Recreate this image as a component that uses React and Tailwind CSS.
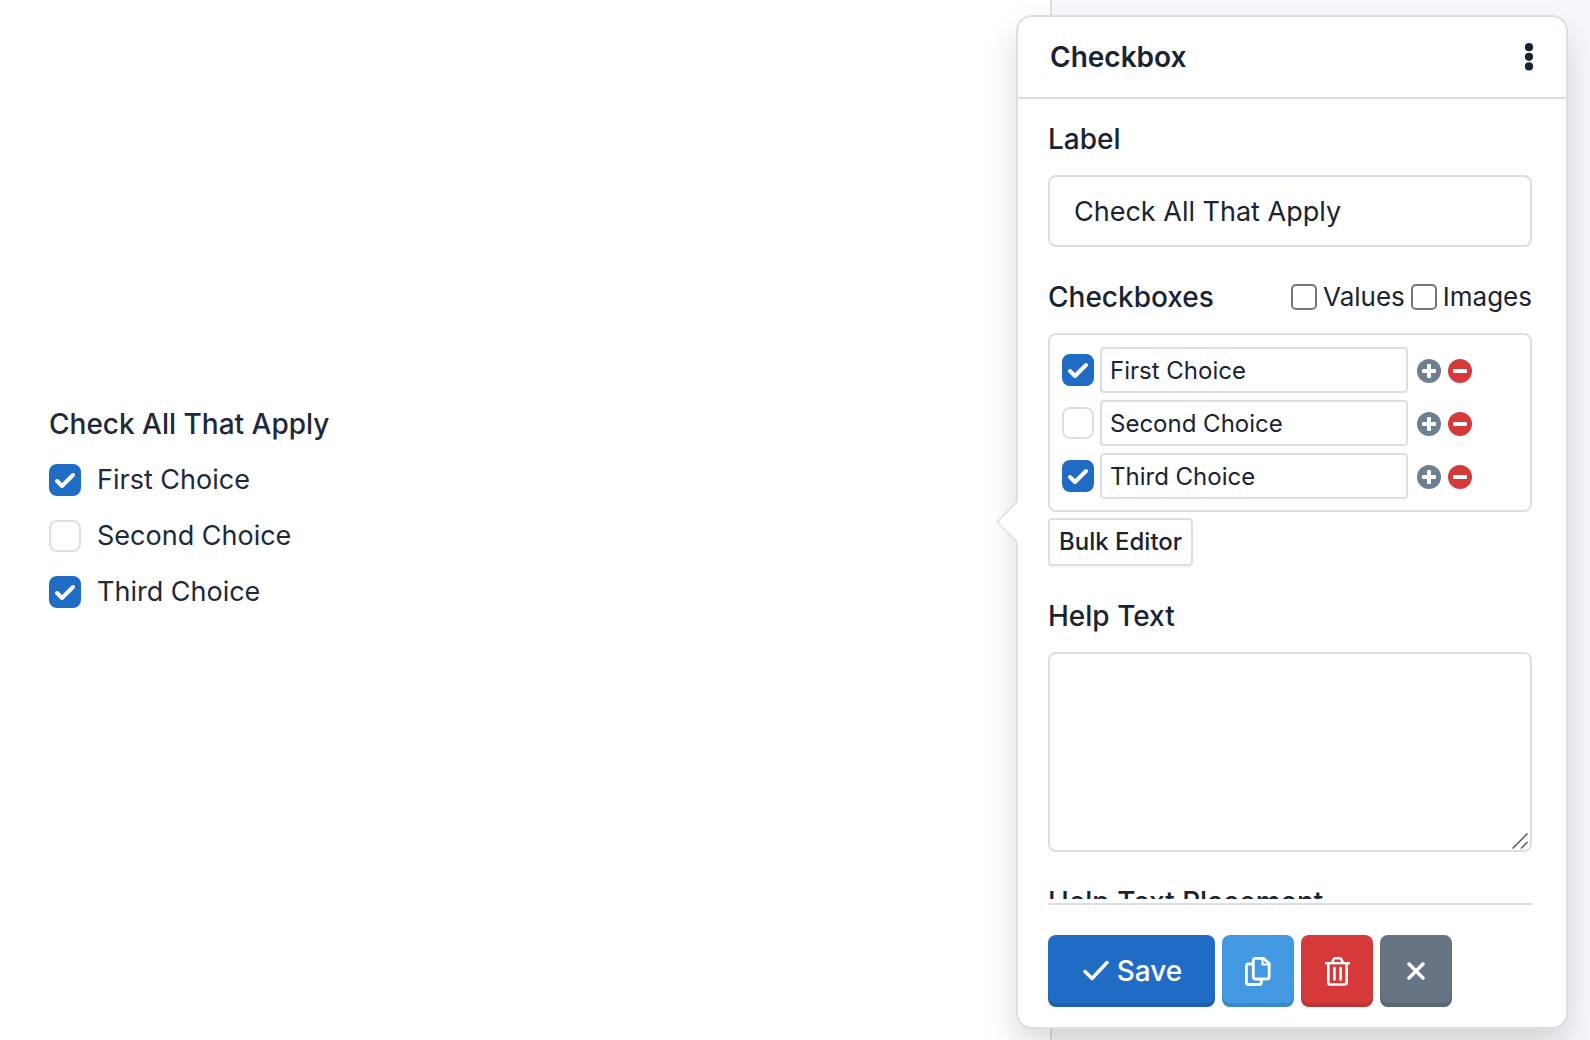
import { useState } from "react";

const INITIAL_CHOICES = [
  { id: "first", text: "First Choice", checked: true },
  { id: "second", text: "Second Choice", checked: false },
  { id: "third", text: "Third Choice", checked: true },
];

function Checkbox({ id, checked, onChange, label }) {
  return (
    <span className="grid size-8 shrink-0">
      <input
        id={id}
        type="checkbox"
        aria-label={label}
        checked={checked}
        onChange={onChange}
        className="peer col-start-1 row-start-1 size-8 appearance-none rounded-lg border-2 border-[#dcdfe6] bg-white checked:border-[#206bc4] checked:bg-[#206bc4]"
      />
      <svg
        viewBox="0 0 16 16"
        className="pointer-events-none invisible col-start-1 row-start-1 size-8 peer-checked:visible"
        fill="none"
        stroke="#fff"
        strokeWidth="2"
        strokeLinecap="round"
        strokeLinejoin="round"
      >
        <path d="M4 8.5l2.5 2.5l5.5-5.5" />
      </svg>
    </span>
  );
}

function PlainCheckbox({ id, label }) {
  return (
    <span className="flex items-center gap-[6px]">
      <input
        id={id}
        type="checkbox"
        className="size-[26px] appearance-none rounded-[5px] border-2 border-[#767676] bg-white checked:bg-[#206bc4]"
      />
      <label htmlFor={id}>{label}</label>
    </span>
  );
}

function PlusIcon() {
  return (
    <svg viewBox="0 0 24 24" className="size-6">
      <circle cx="12" cy="12" r="12" fill="#6c8092" />
      <rect x="5" y="10" width="14" height="4" rx="1" fill="#fff" />
      <rect x="10" y="5" width="4" height="14" rx="1" fill="#fff" />
    </svg>
  );
}

function MinusIcon() {
  return (
    <svg viewBox="0 0 24 24" className="size-6">
      <circle cx="12" cy="12" r="12" fill="#d63939" />
      <rect x="5" y="10" width="14" height="4" rx="1" fill="#fff" />
    </svg>
  );
}

function Preview({ choices, onToggle }) {
  return (
    <main className="flex min-w-0 flex-1 flex-col justify-center border-r-2 border-[#dadfe5] bg-white pb-6 pl-[49px] text-[#1e293b]">
      <fieldset>
        <legend className="mb-4 font-medium leading-10">Check All That Apply</legend>
        <div className="flex flex-col gap-4 text-[27px]">
          {choices.map((choice) => (
            <div key={choice.id} className="flex items-center gap-4">
              <Checkbox
                id={`preview-${choice.id}`}
                checked={choice.checked}
                onChange={() => onToggle(choice.id)}
              />
              <label htmlFor={`preview-${choice.id}`} className="leading-10">
                {choice.text}
              </label>
            </div>
          ))}
        </div>
      </fieldset>
    </main>
  );
}

const actionButton =
  "flex h-18 items-center justify-center rounded-lg text-white shadow-[inset_0_-4px_0_rgba(24,36,51,0.15)]";

export default function App() {
  const [choices, setChoices] = useState(INITIAL_CHOICES);

  const toggle = (id) =>
    setChoices(choices.map((c) => (c.id === id ? { ...c, checked: !c.checked } : c)));

  const rename = (id, text) =>
    setChoices(choices.map((c) => (c.id === id ? { ...c, text } : c)));

  return (
    <div className="relative flex h-screen overflow-hidden bg-[#f6f8fb] font-['Inter',sans-serif] text-[28px] text-[#182433]">
      <Preview choices={choices} onToggle={toggle} />
      <div className="w-[538px] shrink-0" />

      {/* field settings popover, floats over the form and the sidebar */}
      <aside className="absolute top-[15px] right-[22px] bottom-[11px] flex w-[552px] flex-col rounded-2xl border-2 border-[#dadfe5] bg-white shadow-[0_16px_32px_rgba(0,0,0,0.15)]">
        <svg viewBox="0 0 22 42" className="absolute top-1/2 right-full h-[42px] w-[22px] -translate-y-1/2">
          <path d="M22 0 1 21 22 42Z" fill="#fff" />
          <path d="M21 1 1 21 21 41" fill="none" stroke="#dadfe5" strokeWidth="1.5" />
        </svg>

        <header className="flex h-[82px] shrink-0 items-center justify-between border-b-2 border-[#dadfe5] px-8">
          <h2 className="font-semibold">Checkbox</h2>
          <button type="button" aria-label="More options">
            <svg viewBox="0 0 10 28" className="h-7 w-[10px]" fill="#182433">
              <circle cx="5" cy="4.2" r="4.1" />
              <circle cx="5" cy="13.8" r="4.1" />
              <circle cx="5" cy="23.4" r="4.1" />
            </svg>
          </button>
        </header>

        <div className="mr-[34px] ml-[30px] flex min-h-0 flex-1 flex-col overflow-hidden pt-5">
          <label htmlFor="field-label" className="font-medium leading-10">
            Label
          </label>
          <input
            id="field-label"
            type="text"
            defaultValue="Check All That Apply"
            className="mt-4 h-18 w-full shrink-0 rounded-lg border-2 border-[#dadfe5] px-6 text-[27px]"
          />

          <div className="mt-[30px] flex shrink-0 items-center justify-between leading-10">
            <h3 className="font-medium">Checkboxes</h3>
            <div className="flex gap-[6px] text-[26px]">
              <PlainCheckbox id="show-values" label="Values" />
              <PlainCheckbox id="show-images" label="Images" />
            </div>
          </div>

          <ul className="mt-4 flex shrink-0 flex-col gap-[7px] rounded-lg border-2 border-[#dadfe5] px-3 pt-3 pb-[11px] text-2xl">
            {choices.map((choice) => (
              <li key={choice.id} className="flex items-center">
                <Checkbox
                  checked={choice.checked}
                  onChange={() => toggle(choice.id)}
                  label={`${choice.text} is checked`}
                />
                <input
                  type="text"
                  aria-label="Choice text"
                  value={choice.text}
                  onChange={(e) => rename(choice.id, e.target.value)}
                  className="ml-[6px] h-[46px] w-[308px] rounded-sm border-2 border-[#dadfe5] px-2"
                />
                <div className="ml-[9px] flex gap-[7px] pt-[2px]">
                  <button type="button" aria-label="Add choice">
                    <PlusIcon />
                  </button>
                  <button type="button" aria-label="Remove choice">
                    <MinusIcon />
                  </button>
                </div>
              </li>
            ))}
          </ul>

          <button
            type="button"
            className="mt-[6px] h-12 shrink-0 self-start rounded-sm border-2 border-[#dadfe5] bg-white px-[9px] text-2xl font-medium shadow-[0_2px_0_rgba(24,36,51,0.04)]"
          >
            Bulk Editor
          </button>

          <label htmlFor="help-text" className="mt-[30px] font-medium leading-10">
            Help Text
          </label>
          <div className="relative mt-4 shrink-0">
            <textarea
              id="help-text"
              className="block h-[200px] w-full resize-none rounded-lg border-2 border-[#dadfe5] px-6 py-4"
            />
            <svg
              viewBox="0 0 16 16"
              className="pointer-events-none absolute right-1 bottom-[3px] size-4"
              stroke="#555"
              strokeWidth="1.5"
            >
              <path d="M0.5 15.5l15-15M9 15.5l6.5-6.5" />
            </svg>
          </div>

          <h3 className="mt-[30px] shrink-0 font-medium leading-10">Help Text Placement</h3>
        </div>

        <footer className="mt-1 mr-[34px] ml-[30px] flex shrink-0 gap-[7px] border-t-2 border-[#dadfe5] pt-[30px] pb-5">
          <button type="button" className={`${actionButton} w-[167px] gap-2 bg-[#206bc4] font-medium`}>
            <svg viewBox="0 0 28 28" className="size-7" fill="none" stroke="#fff" strokeWidth="3.5" strokeLinecap="round" strokeLinejoin="round">
              <path d="M4 14.5l7 7L26 5.5" />
            </svg>
            Save
          </button>
          <button type="button" aria-label="Duplicate" className={`${actionButton} w-18 bg-[#4299e1]`}>
            <svg viewBox="0 0 26 29" className="h-[29px] w-[26px]" fill="none" stroke="#fff" strokeWidth="2.8" strokeLinejoin="round">
              <path d="M10.3 1.4H18.5L24.2 6.5V20a2 2 0 0 1-2 2H10.300a2 2 0 0 1-2-2V3.400a2 2 0 0 1 2-2Z" />
              <path d="M17.500 1.500V7.500H23.500" strokeWidth="2" />
              <path d="M8.300 7H3.400a2 2 0 0 0-2 2V25.500a2 2 0 0 0 2 2H14.300a2 2 0 0 0 2-2V22" />
            </svg>
          </button>
          <button type="button" aria-label="Delete" className={`${actionButton} w-18 bg-[#d63939]`}>
            <svg viewBox="0 0 25 29" className="h-[29px] w-[25px]" fill="none" stroke="#fff" strokeWidth="2.6" strokeLinejoin="round">
              <path d="M0 6.2H25" strokeWidth="2.4" />
              <path d="M3.3 6.5V25.5a2 2 0 0 0 2 2H19.7a2 2 0 0 0 2-2V6.5" />
              <path d="M7 5.8L8.7 2.3a1.6 1.6 0 0 1 1.4-1H14.9a1.6 1.6 0 0 1 1.4 1L18 5.8" />
              <path d="M9.4 11V22.5M15.6 11V22.5" strokeLinecap="round" />
            </svg>
          </button>
          <button type="button" aria-label="Close" className={`${actionButton} w-18 bg-[#667382]`}>
            <svg viewBox="0 0 18 18" className="size-[18px]" fill="none" stroke="#fff" strokeWidth="3.5" strokeLinecap="round">
              <path d="M2 2l14 14M16 2L2 16" />
            </svg>
          </button>
        </footer>
      </aside>
    </div>
  );
}
